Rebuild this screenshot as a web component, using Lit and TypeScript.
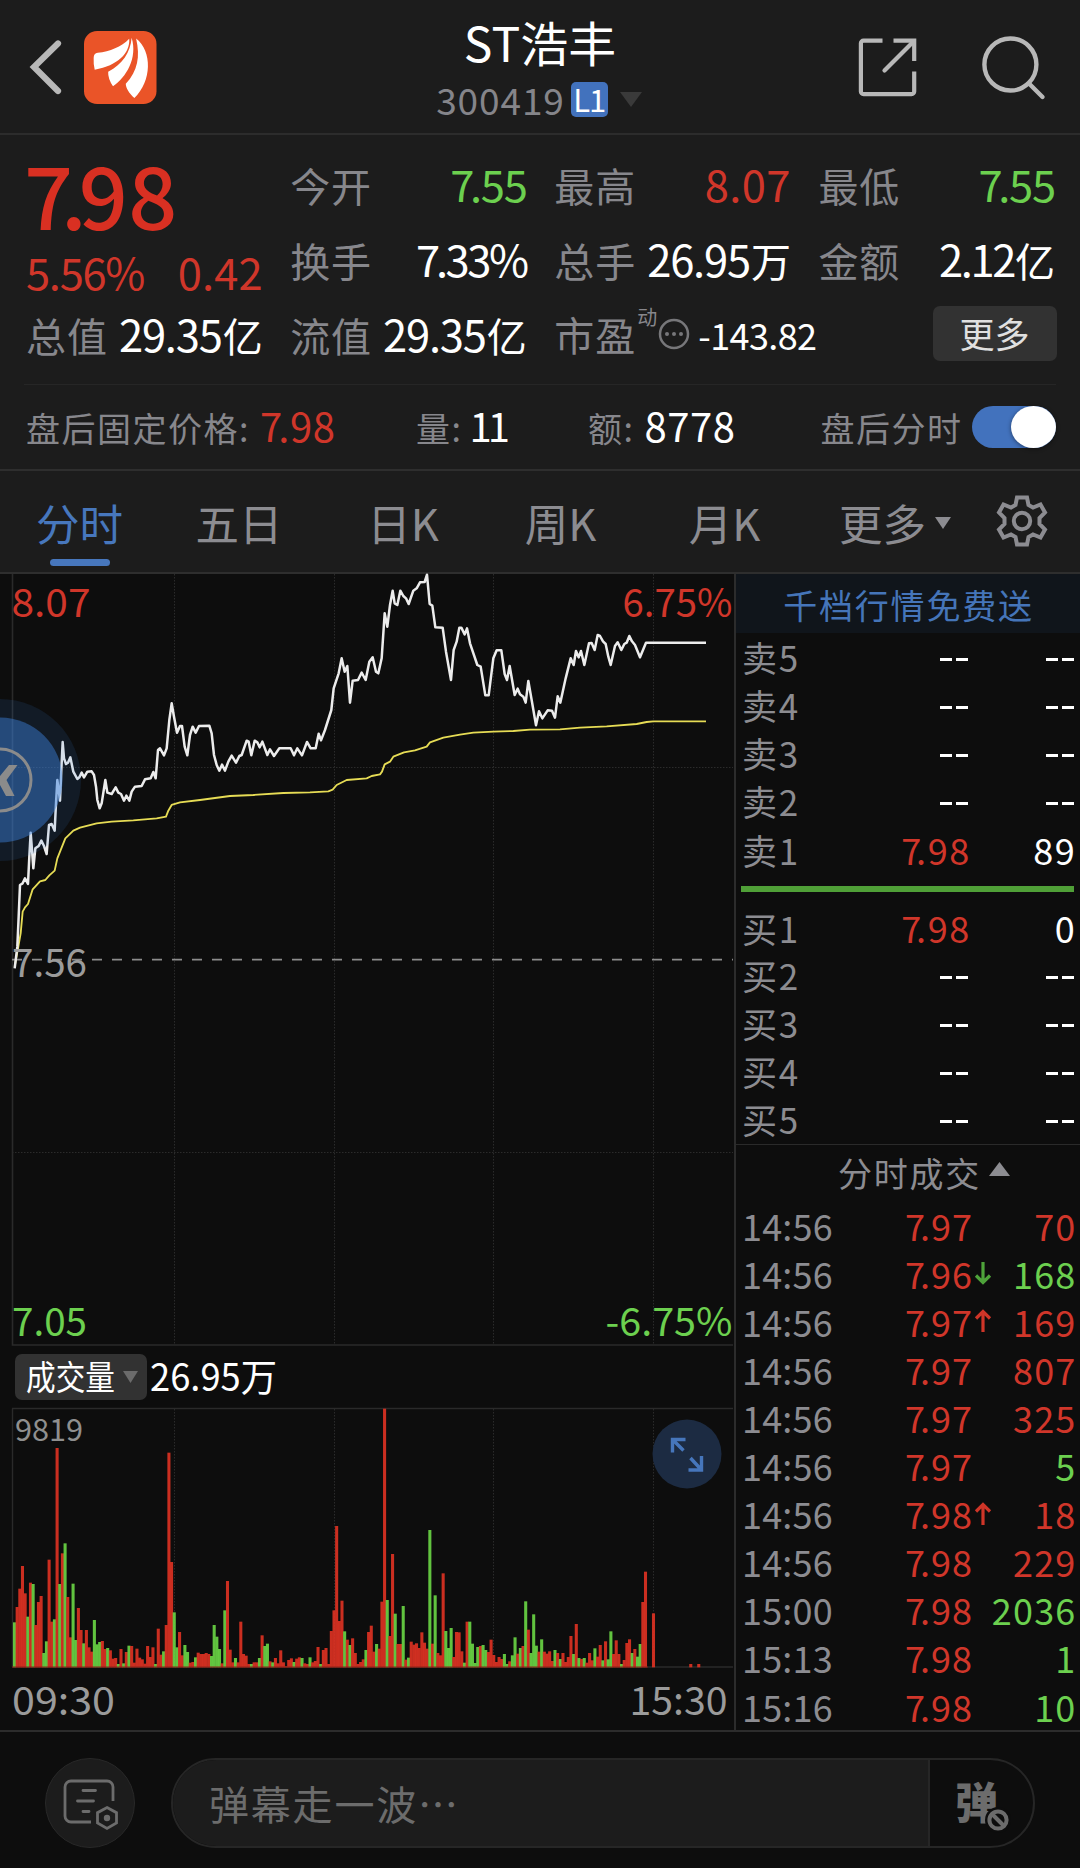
import { LitElement, html, svg, css } from "lit";
import { customElement, property } from "lit/decorators.js";

const PRICE_LINE =
  "44,1195 52,1130 56,1040 60,945 68,940 75,925 84,942 88,860 92,788 96,840 100,895 106,835 116,828 124,812 132,828 140,852 147,765 155,762 164,782 168,700 172,630 180,692 184,600 188,516 192,565 198,582 204,578 211,562 220,605 232,627 238,622 245,608 252,622 262,605 275,604 282,615 288,650 292,690 299,715 305,700 316,630 322,668 335,672 347,652 355,668 363,672 372,692 379,677 388,692 395,665 405,650 425,648 435,628 452,625 460,606 467,625 474,540 480,535 492,556 500,535 508,450 515,400 522,440 531,488 540,468 546,468 554,530 562,556 570,495 578,470 587,488 597,468 628,467 635,490 642,555 650,585 658,602 666,584 675,602 685,575 695,557 708,578 718,558 725,555 740,512 746,515 754,556 764,512 772,517 779,532 787,515 802,555 810,538 822,558 838,535 872,535 882,556 892,535 906,556 921,516 932,535 947,535 956,491 963,511 975,480 994,420 1001,355 1016,310 1025,265 1034,305 1042,288 1050,398 1058,332 1074,330 1085,308 1097,330 1108,275 1118,262 1128,305 1135,310 1145,265 1154,130 1162,170 1170,105 1178,62 1184,100 1192,105 1201,62 1210,78 1218,85 1226,102 1240,62 1250,55 1260,37 1274,36 1281,14 1289,102 1297,107 1306,172 1328,173 1338,245 1353,330 1361,240 1370,215 1378,173 1384,173 1394,193 1401,175 1410,220 1432,285 1442,290 1456,376 1466,376 1480,265 1490,241 1504,241 1514,312 1521,330 1529,288 1544,375 1553,356 1560,373 1570,380 1577,398 1585,333 1595,390 1608,466 1617,424 1627,445 1643,421 1656,422 1665,443 1673,379 1681,398 1697,325 1712,265 1721,285 1728,243 1736,262 1743,243 1753,285 1767,220 1775,219 1784,240 1793,195 1800,198 1809,214 1817,222 1825,260 1832,285 1845,228 1853,217 1864,240 1873,222 1880,218 1888,198 1896,214 1905,225 1920,262 1938,218 2118,218";

const AVERAGE_LINE =
  "44,1190 55,1130 62,1090 68,1025 75,1012 84,1002 98,958 120,934 136,930 148,916 164,902 172,865 196,805 220,782 240,773 290,760 335,755 400,751 470,745 498,740 505,722 515,705 540,697 600,690 690,678 760,675 850,669 930,667 985,664 998,659 1010,645 1040,630 1100,625 1115,618 1140,613 1146,605 1154,583 1170,575 1180,560 1212,547 1245,541 1280,530 1290,517 1330,503 1380,494 1420,488 1480,485 1540,483 1590,479 1680,478 1740,473 1820,469 1910,462 1940,456 1960,454 2118,454";

/* One entry per minute: direction letter plus the bar's top edge. */
const VOLUME =
  "g967 r921 r866 r798 r880 g950 r848 g852 r975 r906 r888 g1059 g1024 r779 r965 g958 r444 g852 r760 g730 r891 r1012 g851 g1020 r924 r990 g1030 r990 r1042 r1055 g960 g1033 g1026 r1023 r1047 g1044 r1051 r1076 r1074 g1092 r1047 g1090 r1056 g1037 r1038 r1088 r1046 r1073 r1078 r1091 r1038 r1071 r1042 g1092 r986 r1064 g1054 r975 r458 r786 g937 g1042 r996 r1066 g1035 g1056 r1088 r1086 g1072 r1058 r1062 r1062 r1059 r1062 g1068 g975 g1010 g1047 r1090 g931 r843 r1049 r1087 g1074 r1087 r965 r1062 r1067 r1092 g1092 r1087 r1087 g1074 r1006 g1038 g1031 r1084 g1087 r1074 r1090 r1051 r1087 r1099 r1080 r1075 g1086 r1076 r1072 g1074 r1090 r1092 g1072 r1087 r1083 r1041 g1092 r1050 r1044 r1092 r993 r931 r678 r963 r902 g994 r1019 g1035 r1015 r1059 r1092 r1086 r1078 g1050 r996 r977 r1055 g1032 r1046 r905 r326 g900 r1008 r762 g941 r1032 r1032 g918 r1079 g1073 r1025 r1034 r1030 r1044 r997 r1028 r1046 g690 r1031 g886 r1059 r1066 r820 g993 g1044 g984 r1071 r996 r997 r1054 g1088 r965 g965 g1031 g1089 g1041 r1038 g1035 g1050 r1056 r1019 r1065 r1086 r1071 r1077 g1062 g1092 r1084 g1066 g1012 r1061 g1044 r1038 g904 r989 g1059 g943 g1037 r1055 g1018 r1055 r1061 r1054 r1083 g1050 r1059 g1077 r1059 r1086 r1071 r1008 g1062 r972 g1074 r1077 g1074 r1088 r1059 r1081 g1045 r1070 r1035 g1081 r1024 g1078 g994 r1062 r1021 r1062 g1092 r1080 r1029 r1018 g1059 r1047 g1070 g1032 r906 r815";

interface Bar { minute: number; up: boolean; top: number; }

const BARS: Bar[] = [
  ...VOLUME.split(" ").map((t, minute) => ({ minute, up: t[0] === "r", top: Number(t.slice(1)) })),
  { minute: 240, up: true, top: 940 },
  { minute: 254, up: true, top: 1092 },
  { minute: 257, up: true, top: 1092 },
];

/* Tightens a leading 7 against its decimal point. */
const num = (s: string) =>
  s.startsWith("7.") ? html`<span class="k">7</span>${s.slice(1)}` : html`${s}`;

const shared = css`
  :host { box-sizing: border-box; flex-shrink: 0; }
  * { box-sizing: border-box; }
  .k { letter-spacing: -0.1em; }
  .red { color: #d0362a; }
  .green { color: #6cd04f; }
  .white { color: #fff; }
  svg { display: block; flex: none; overflow: visible; }
`;

@customElement("quote-header")
class QuoteHeader extends LitElement {
  static styles = [shared, css`
    :host { display: grid; grid-template-columns: 1fr auto 1fr; height: 135px; border-bottom: 2px solid #2c2c2c; background: #1c1c1c; }
    .left { display: flex; padding: 31px 0 0 28px; gap: 20px; }
    .back { margin-top: 7px; }
    .mid { display: flex; flex-direction: column; align-items: center; padding-top: 11px; }
    .title { font-size: 48px; line-height: 60px; color: #fff; font-weight: 400; }
    .code { display: flex; align-items: center; height: 54px; margin-top: 1px; padding-right: 2px; color: #85858a; font-size: 37px; letter-spacing: .9px; }
    .level { margin-left: 6px; width: 37px; height: 35px; border-radius: 5px; background: #4272bd; color: #fff; font-size: 31px; line-height: 34px; text-align: center; letter-spacing: -1px; }
    .drop { margin-left: 12px; }
    .right { display: flex; justify-content: flex-end; padding: 36px 33px 0 0; gap: 62px; }
  `];
  render() {
    return html`
      <div class="left">
        <svg class="back" width="36" height="60" viewBox="28 38 36 60" fill="none" stroke="#b8b8b8" stroke-width="6.200" stroke-linecap="round"><path d="M58 43.500 34 67l24 24"/></svg>
        <svg width="72.500" height="73" viewBox="0 0 210 217" preserveAspectRatio="none">
          <rect width="210" height="217" rx="38" fill="#ea5428"/>
          <g fill="#fff">
            <path d="M28 80Q28 67 40 65C75 60 108 48 131 23C134 65 98 103 31 115Q27 98 28 80Z"/>
            <path d="M138 20C156 80 122 138 84 164Q69 142 70 121C112 98 134 65 138 20Z"/>
            <path d="M151 22C198 60 197 148 146 199C130 186 121 168 121 157C156 118 163 76 151 22Z"/>
          </g>
        </svg>
      </div>
      <div class="mid">
        <div class="title">ST浩丰</div>
        <div class="code"><span>300419</span><span class="level">L1</span>
          <svg class="drop" width="22" height="15" viewBox="0 0 22 15"><path d="M0 0h22L11 15z" fill="#3a3a3a"/></svg>
        </div>
      </div>
      <div class="right">
        <svg width="62" height="64" viewBox="856 36 62 64" fill="none" stroke="#b8b8b8" stroke-width="4.2" stroke-linejoin="round">
          <path d="M881.5 40.6H862.5a2.6 2.6 0 0 0-2.6 2.6V91.500a2.600 2.600 0 0 0 2.600 2.600H910.600a2.600 2.600 0 0 0 2.600-2.600V71.500"/>
          <path d="M892.500 40.600H913.200V61" stroke-linejoin="miter"/><path d="M912 42 883.500 70.500" stroke-linecap="round"/>
        </svg>
        <svg width="66" height="64" viewBox="980 36 66 64" fill="none" stroke="#b8b8b8" stroke-width="4.400" stroke-linecap="round"><circle cx="1009.400" cy="64.500" r="26"/><path d="M1028.500 84 1041.500 97"/></svg>
      </div>`;
  }
}

@customElement("quote-stats")
class QuoteStats extends LitElement {
  static styles = [shared, css`
    :host { display: block; background: #1c1c1c; color: #87878c; padding-top: 11px; }
    .grid { display: grid; grid-template-columns: repeat(4, minmax(0, 1fr)); grid-auto-rows: 75px; column-gap: 27.5px; padding: 0 25px 0 26px; height: 238px; }
    .cell { display: flex; justify-content: space-between; align-items: baseline; line-height: 76px; white-space: nowrap; }
    .label { font-size: 40px; letter-spacing: 1px; }
    .val { font-size: 43.500px; letter-spacing: -1.200px; }
    .val.open { letter-spacing: .4px; }
    .val.tight { letter-spacing: -2.400px; }
    .val i { font-style: normal; font-size: 40px; letter-spacing: 0; margin-left: 1px; }
    .last { grid-row: span 2; display: flex; flex-direction: column; }
    .price { font-size: 86px; font-weight: 500; line-height: 94px; height: 94px; color: #d93022; letter-spacing: .5px; white-space: nowrap; margin-left: -2px; }
    .price .k { letter-spacing: -12px; }
    .price .dot { letter-spacing: -8px; }
    .delta { display: flex; justify-content: space-between; font-size: 43.500px; line-height: 63px; letter-spacing: -1.300px; height: 56px; }
    .delta :last-child { letter-spacing: .1px; }
    .pe { display: flex; line-height: 76px; white-space: nowrap; }
    .sup { font-size: 20px; line-height: 20px; margin: 11px 0 0 1px; }
    .info { margin: 22px 0 0 1px; }
    .pev { font-size: 36px; font-weight: 400; margin-left: 8px; letter-spacing: -.6px; }
    .more { justify-self: end; align-self: start; margin: 10px -1.500px 0 0; width: 124px; height: 55px; border-radius: 7px; background: #323232; color: #e0e0e0; font-size: 35px; line-height: 53px; text-align: center; }
    .after { margin: 0 24px; border-top: 1px solid #262626; height: 85px; display: grid; grid-template-columns: 390px 172px 1fr auto auto; align-items: center; padding: 0 .500px 0 2px; font-size: 34px; letter-spacing: 1.500px; }
    .pair { display: flex; align-items: baseline; white-space: nowrap; margin-bottom: 4px; }
    .pair b { font-weight: 400; font-size: 40px; letter-spacing: .6px; margin-left: 10px; }
    .pair b.tight { letter-spacing: -4px; margin-left: 7px; }
    .switch { display: flex; justify-content: flex-end; width: 84px; height: 42px; border-radius: 21px; background: #4272bd; margin-left: 9px; }
    .knob { width: 45px; height: 42px; border-radius: 50%; background: #fff; box-shadow: 0 1px 4px rgba(0,0,0,.45); }
  `];
  private cell(label: string, value: string, cls: string, unit = "") {
    return html`<div class="cell"><span class="label">${label}</span><span class="val ${cls}">${num(value)}${unit ? html`<i>${unit}</i>` : ""}</span></div>`;
  }
  render() {
    return html`
      <div class="grid">
        <div class="last">
          <div class="price"><span class="k">7</span><span class="dot">.</span>98</div>
          <div class="delta red"><span>5.56%</span><span>0.42</span></div>
        </div>
        ${this.cell("今开", "7.55", "green")}
        ${this.cell("最高", "8.07", "red open")}
        ${this.cell("最低", "7.55", "green")}
        ${this.cell("换手", "7.33%", "white tight")}
        ${this.cell("总手", "26.95", "white", "万")}
        ${this.cell("金额", "2.12", "white tight", "亿")}
        ${this.cell("总值", "29.35", "white", "亿")}
        ${this.cell("流值", "29.35", "white", "亿")}
        <div class="pe">
          <span class="label">市盈</span><span class="sup">动</span>
          <svg class="info" width="32" height="32" viewBox="-16 -16 32 32"><circle r="14" fill="none" stroke="#77777a" stroke-width="2.500"/><g fill="#77777a"><circle cx="-7" r="2"/><circle r="2"/><circle cx="7" r="2"/></g></svg>
          <span class="pev white">-143.82</span>
        </div>
        <div class="more">更多</div>
      </div>
      <div class="after">
        <div class="pair"><span>盘后固定价格:</span><b class="red">${num("7.98")}</b></div>
        <div class="pair"><span>量:</span><b class="white tight">11</b></div>
        <div class="pair"><span>额:</span><b class="white">8778</b></div>
        <span>盘后分时</span>
        <div class="switch"><div class="knob"></div></div>
      </div>`;
  }
}

@customElement("period-tabs")
class PeriodTabs extends LitElement {
  static styles = [shared, css`
    :host { display: grid; grid-template-columns: 159px 160px 168px 147px 181px 1fr auto; height: 105px; border-top: 2px solid #2e2e2e; border-bottom: 2px solid #2e2e2e; background: #1c1c1c; color: #8c8c91; font-size: 43.500px; line-height: 103px; }
    .tab { display: flex; flex-direction: column; align-items: center; }
    .active { color: #4777bd; }
    .bar { width: 60px; height: 6.500px; border-radius: 4px; background: #4777bd; margin-top: -15px; }
    .more { display: flex; align-items: center; padding-left: 24px; gap: 9px; }
    .gear { margin: 23px 31px 0 0; }
  `];
  render() {
    return html`
      <div class="tab active">分时<div class="bar"></div></div>
      ${["五日", "日K", "周K", "月K"].map((t) => html`<div class="tab">${t}</div>`)}
      <div class="more"><span>更多</span><svg width="16" height="12" viewBox="0 0 16 12"><path d="M0 0h16L8 12z" fill="#8c8c91"/></svg></div>
      <svg class="gear" width="54" height="54" viewBox="-27 -27 54 54" fill="none" stroke="#8c8c91" stroke-width="4">
        <path d="M-5 -23.500H5L6.500 -16L11 -13.500L18.500 -16.500L23 -8.500L17.500 -3V3L23 8.500L18.500 16.500L11 13.500L6.500 16L5 23.500H-5L-6.500 16L-11 13.500L-18.500 16.500L-23 8.500L-17.500 3V-3L-23 -8.500L-18.500 -16.500L-11 -13.500L-6.500 -16Z"/>
        <circle r="8.200"/>
      </svg>`;
  }
}

@customElement("minute-chart")
class MinuteChart extends LitElement {
  static styles = [shared, css`
    :host { display: flex; flex-direction: column; position: relative; width: 734px; height: 1156px; background: #0d0d0d; }
    text { font-size: 39px; }
    .legend { height: 62px; display: flex; align-items: center; padding-left: 15px; }
    .pick { display: flex; align-items: center; width: 132px; height: 46px; border-radius: 7px; background: #323232; padding-left: 11px; }
    .caret { margin-left: 7px; }
    .total { margin-left: 4px; }
    .name { font-size: 34px; }
    .sum { font-size: 38px; }
    .peak { font-size: 31px; }
    .bubble { position: absolute; left: 0; top: 125px; }
    .expand { position: absolute; left: 652px; top: 845px; }
  `];
  render() {
    const cols = [174.5, 334.5, 493.5, 653.5];
    return html`
      <svg width="734" height="772" viewBox="0 574 734 772">
        <g stroke="#2b2b2b" stroke-dasharray="1.500 1.500">
          ${cols.map((x) => svg`<path d="M${x} 574V1344"/>`)}
          <path d="M12 767.500H733M12 1152.500H733"/>
        </g>
        <path d="M12.500 574V1345H733" fill="none" stroke="#2a2a2a" stroke-width="1.600"/>
        <path d="M12 959.700H733" stroke="#8c8c8c" stroke-width="1.800" stroke-dasharray="10 10"/>
        <g transform="translate(0 570) scale(.33333)" fill="none" stroke-linejoin="round">
          <polyline points=${AVERAGE_LINE} stroke="#e6dc55" stroke-width="5.500"/>
          <polyline points=${PRICE_LINE} stroke="#ececec" stroke-width="7.500"/>
        </g>
        <text x="11.500" y="617" textLength="79" lengthAdjust="spacingAndGlyphs" fill="#d0362a">8.07</text>
        <text x="622.500" y="617" textLength="110" lengthAdjust="spacingAndGlyphs" fill="#d0362a">6.75%</text>
        <text x="12" y="976.500" textLength="75" lengthAdjust="spacingAndGlyphs" fill="#9b9b9b">7.56</text>
        <text x="12" y="1335.500" textLength="75" lengthAdjust="spacingAndGlyphs" fill="#6cd04f">7.05</text>
        <text x="605.500" y="1335.500" textLength="127" lengthAdjust="spacingAndGlyphs" fill="#6cd04f">-6.75%</text>
      </svg>
      <div class="legend">
        <div class="pick">
          <svg width="90" height="46" viewBox="0 0 90 46"><text class="name" x="0" y="35.500" textLength="89" lengthAdjust="spacingAndGlyphs" fill="#fff">成交量</text></svg>
          <svg class="caret" width="16" height="12" viewBox="0 0 16 12"><path d="M0 0h15L7.500 12z" fill="#6b6b6b"/></svg>
        </div>
        <svg class="total" width="130" height="46" viewBox="0 0 130 46"><text class="sum" x="-1" y="37" textLength="127" lengthAdjust="spacingAndGlyphs" fill="#fff">26.95万</text></svg>
      </div>
      <svg width="734" height="322" viewBox="0 1408 734 322">
        <g stroke="#2b2b2b" stroke-dasharray="1.500 1.500">${cols.map((x) => svg`<path d="M${x} 1409V1667"/>`)}</g>
        <path d="M12.500 1408.500V1667M12 1408.500H733M12 1667H733" fill="none" stroke="#2a2a2a" stroke-width="1.400"/>
        <g transform="translate(0 1300) scale(.33333)">
          ${BARS.map((b) => {
            const x = 43.500 + b.minute * 7.9875;
            return svg`<rect x=${x - 4.600} y=${b.top} width="9.200" height=${1102 - b.top} fill=${b.up ? "#da3122" : "#68d244"} fill-opacity=".93"/>`;
          })}
        </g>
        <path d="M12 1667H648" stroke="#8a2118" stroke-width="1"/>
        <text class="peak" x="15" y="1440.700" textLength="68" lengthAdjust="spacingAndGlyphs" fill="#8f8f8f">9819</text>
        <text x="12" y="1715" textLength="103" lengthAdjust="spacingAndGlyphs" fill="#9b9b9b">09:30</text>
        <text x="629.500" y="1715" textLength="98" lengthAdjust="spacingAndGlyphs" fill="#9b9b9b">15:30</text>
      </svg>
      <svg class="bubble" width="82" height="162" viewBox="0 -81 82 162">
        <circle r="81" fill="#3d82de" fill-opacity=".12"/><circle r="62.500" fill="#3d82de" fill-opacity=".46"/>
        <circle r="31" fill="none" stroke="#8b8b8b" stroke-width="3"/>
        <path d="M9 -15H17.500L6.500 0L14.500 16H6L0 5V-4Z" fill="#8b8b8b"/>
      </svg>
      <svg class="expand" width="70" height="70" viewBox="-35 -35 70 70"><circle r="34.500" fill="#1c2b42"/>
        <path d="M-1.500 -14.500H-14.500V-1.500M-14.500 -14.500L-3.500 -3.500M1.500 16H14.500V2M14.500 16L3.500 4" fill="none" stroke="#4676bb" stroke-width="3.400"/></svg>`;
  }
}

type Trade = [string, string, string, boolean, string?];

@customElement("order-book")
class OrderBook extends LitElement {
  static styles = [shared, css`
    :host { display: block; width: 346px; height: 1156px; border-left: 2px solid #2c2c2c; background: #0d0d0d; color: #8c8c91; font-size: 36px; }
    .promo { height: 59px; background: #10151b; color: #4575b9; font-size: 34px; letter-spacing: 1.800px; line-height: 62px; text-align: center; padding-left: 1px; }
    .row { display: flex; align-items: baseline; height: 48px; line-height: 48px; padding: 0 3.500px 0 6px; letter-spacing: 1.700px; white-space: nowrap; }
    .row .k { letter-spacing: -.15em; }
    .t { width: 110px; }
    .p { width: 119px; text-align: right; }
    .q { flex: 1; text-align: right; }
    .name { font-size: 35px; }
    .line { height: 6px; margin: 13px 6px 11.300px 5px; background: #4f9f37; }
    .dash { display: inline-flex; justify-content: flex-end; gap: 4px; align-self: center; margin-top: 4px; }
    .dash i { width: 12px; height: 3px; background: #fff; }
    .dash i:last-child { margin-right: 3px; }
    .head { display: flex; justify-content: center; align-items: center; height: 56.300px; margin-top: 1px; border-top: 1px solid #2a2a2a; font-size: 34px; letter-spacing: 1.800px; gap: 8px; padding: 0 0 1px 32px; }
    .head svg { margin-top: -6px; }
    .trades .row { height: 48.100px; letter-spacing: 1.200px; }
    .trades .t { letter-spacing: .2px; }
    .trades .p { width: 121px; letter-spacing: 1px; }
    .trades .k { letter-spacing: -.14em; }
    .arrow { width: 0; align-self: flex-start; padding-top: 12.500px; }
  `];
  private level(name: string, price?: string, qty?: string) {
    return html`<div class="row"><span class="t name">${name}</span>
      ${price
        ? html`<span class="p red">${num(price)}</span><span class="q white">${qty}</span>`
        : html`<span class="p dash"><i></i><i></i></span><span class="q dash"><i></i><i></i></span>`}</div>`;
  }
  render() {
    const trades: Trade[] = [
      ["14:56", "7.97", "70", true], ["14:56", "7.96", "168", false, "down"], ["14:56", "7.97", "169", true, "up"],
      ["14:56", "7.97", "807", true], ["14:56", "7.97", "325", true], ["14:56", "7.97", "5", false],
      ["14:56", "7.98", "18", true, "up"], ["14:56", "7.98", "229", true], ["15:00", "7.98", "2036", false],
      ["15:13", "7.98", "1", false], ["15:16", "7.98", "10", false],
    ];
    return html`
      <div class="promo">千档行情免费送</div>
      <div class="asks">${["卖5", "卖4", "卖3", "卖2"].map((n) => this.level(n))}${this.level("卖1", "7.98", "89")}</div>
      <div class="line"></div>
      <div class="bids">${this.level("买1", "7.98", "0")}${["买2", "买3", "买4", "买5"].map((n) => this.level(n))}</div>
      <div class="head"><span>分时成交</span><svg width="21" height="14" viewBox="0 0 21 14"><path d="M0 14h21L10.500 0z" fill="#8c8c91"/></svg></div>
      <div class="trades">${trades.map(([t, p, q, up, dir]) => html`
        <div class="row"><span class="t">${t}</span><span class="p red">${num(p)}</span>
          <span class="arrow">${dir ? html`<svg width="20" height="26" viewBox="0 0 20 26" fill="none" stroke-width="3.200" stroke=${dir === "up" ? "#cf3528" : "#4ea33a"}>
            <path d=${dir === "up" ? "M10 23V3M3 9.500L10 2.500L17 9.500" : "M10 1V22M3 14.500L10 21.500L17 14.500"}/></svg>` : ""}</span>
          <span class="q ${up ? "red" : "green"}">${q}</span>
        </div>`)}</div>`;
  }
}

@customElement("chat-bar")
class ChatBar extends LitElement {
  @property() placeholder = "弹幕走一波…";
  static styles = [shared, css`
    :host { display: flex; height: 138px; border-top: 2px solid #2c2c2c; background: #0d0d0d; padding: 26px 45px 0; gap: 36px; color: #6c6c6c; }
    .set { width: 90px; height: 90px; border-radius: 50%; border: 1.500px solid #282828; background: #1c1c1c; display: flex; align-items: center; justify-content: center; padding: 2px 0 0 2px; }
    .pill { flex: 1; height: 90px; border-radius: 45px; border: 2px solid #262626; display: flex; overflow: hidden; }
    .input { flex: 1; background: #1c1c1c; font-size: 40px; line-height: 86px; letter-spacing: 1.800px; padding-left: 36px; }
    .send { width: 105px; border-left: 2px solid #262626; position: relative; font-size: 43px; font-weight: 900; line-height: 80px; padding-left: 25px; }
    .ban { position: absolute; left: 54.500px; top: 47px; }
  `];
  render() {
    return html`
      <div class="set">
        <svg width="56" height="54" viewBox="64 1779 56 54" fill="none" stroke="#6c6c6c" stroke-width="2.800" stroke-linecap="round">
          <path d="M92 1824H72a6 6 0 0 1-6-6V1789a6 6 0 0 1 6-6H108a6 6 0 0 1 6 6V1803" stroke-linecap="butt"/>
          <path d="M84 1792.500H96.500M78.500 1803H94.500M84 1813.500H90"/>
          <path d="M108 1809.500L117.500 1814.700V1825L108 1830.500L98.500 1825V1814.700Z"/><circle cx="108" cy="1820" r="1.800" fill="#6c6c6c"/>
        </svg>
      </div>
      <div class="pill">
        <div class="input">${this.placeholder}</div>
        <div class="send">弹<svg class="ban" width="26" height="26" viewBox="-13 -13 26 26"><circle r="13" fill="#0d0d0d"/><circle r="8.600" fill="none" stroke="#6c6c6c" stroke-width="4"/><path d="M-6 -6L6 6" stroke="#6c6c6c" stroke-width="4"/></svg></div>
      </div>`;
  }
}

@customElement("app-root")
class AppRoot extends LitElement {
  static styles = css`
    :host { display: flex; flex-direction: column; width: 1080px; height: 1868px; overflow: hidden; background: #0d0d0d; font-family: "Noto Sans CJK SC", "Noto Sans", sans-serif; }
    .main { display: flex; flex-shrink: 0; }
  `;
  render() {
    return html`
      <quote-header></quote-header>
      <quote-stats></quote-stats>
      <period-tabs></period-tabs>
      <div class="main"><minute-chart></minute-chart><order-book></order-book></div>
      <chat-bar></chat-bar>`;
  }
}
